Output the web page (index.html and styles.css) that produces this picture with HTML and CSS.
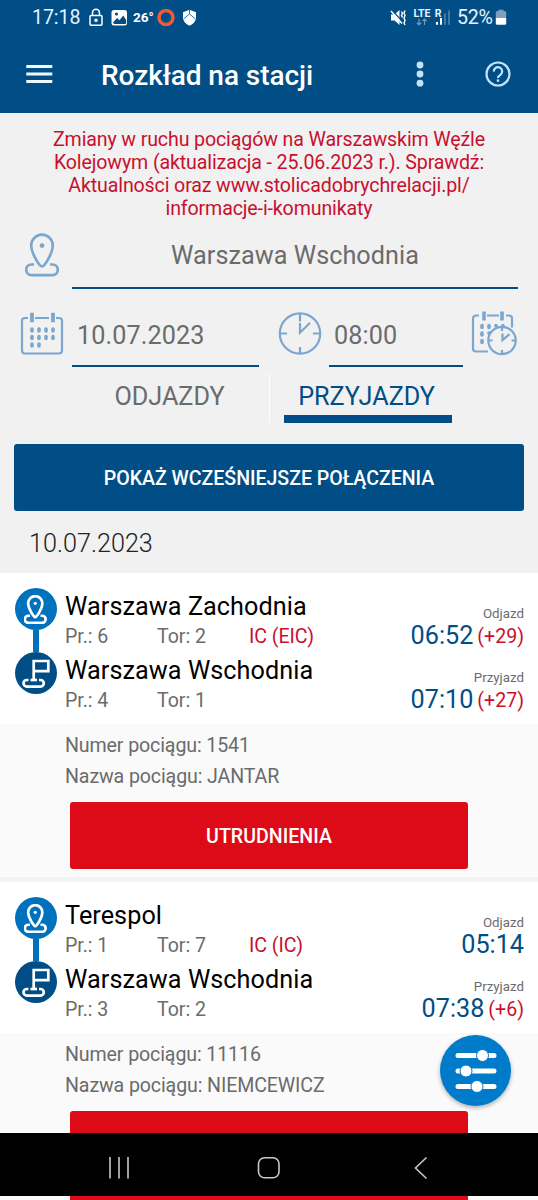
FILE: index.html
```
<!DOCTYPE html>
<html lang="pl">
<head>
<meta charset="utf-8">
<title>Rozkład na stacji</title>
<link rel="stylesheet" href="styles.css">
</head>
<body>
<svg class="defs" width="0" height="0" aria-hidden="true">
  <symbol id="pin" viewBox="0 0 34 44">
    <path d="M17 33.500C14.500 33.500 6.200 20 6.200 12.500a10.800 10.800 0 0 1 21.600 0C27.800 20 19.500 33.500 17 33.500z"/>
    <path d="M9 31.500H6.500a5.300 5.300 0 0 0 0 10.600h21a5.300 5.300 0 0 0 0-10.600H25"/>
    <circle cx="17" cy="12.600" r="2.400" class="dot"/>
  </symbol>
  <symbol id="flag" viewBox="0 0 42 42">
    <path d="M18.700 28V9H33.300V19.200H19"/>
    <path d="M13.500 28H11.800a3.300 3.300 0 0 0 0 6.600H25.500a3.300 3.300 0 0 0 0-6.600H24"/>
    <path d="M15.500 28h6.500"/>
  </symbol>
</svg>
<div class="screen">
  <header class="header">
    <div class="status">
      <span class="clock">17:18</span>
      <svg class="status-left" width="112" height="20" viewBox="88 8 112 20">
        <g fill="none" stroke="#fff" stroke-width="1.500"><rect x="90" y="15.500" width="12" height="9.700" rx="1"/><path d="M92.500 15v-2.200a3.500 3.500 0 0 1 7 0V15"/></g>
        <rect x="94.500" y="18.800" width="3" height="3" fill="#fff"/>
        <rect x="111.500" y="10" width="15.500" height="15.500" rx="2.500" fill="#fff"/>
        <path d="M113 22.500l4-4.500 2.500 2.200 3.700-4.700 3 4.500v3a1 1 0 0 1-1 1h-11z" fill="#004e85"/><circle cx="116.500" cy="14" r="1.600" fill="#004e85"/>
        <text x="133" y="22.300" class="temp">26°</text>
        <circle cx="166" cy="17.500" r="7" fill="none" stroke="#f15a35" stroke-width="3.500"/>
        <path d="M189.500 9.800l6.500 2.500v4.700c0 4-2.500 6.800-6.500 8.800-4-2-6.500-4.800-6.500-8.800v-4.700z" fill="#fff"/>
        <path d="M189.500 9.500v4.500l-5.500 4.500M189.500 14l5.500 4.500" fill="none" stroke="#004e85" stroke-width=".8"/>
      </svg>
      <svg class="status-right" width="61" height="20" viewBox="388 8 61 20">
        <path d="M390 14.500h3.500l5-4.500v15l-5-4.500H390z" fill="#fff"/><path d="M391.500 10.500l10 11.500" stroke="#004e85" stroke-width="1.200"/><path d="M390 11l11 12.500" stroke="#fff" stroke-width="1.500"/>
        <path d="M400.500 11.500l1 2-1 2 1 2M404 10.500l-1 2.500 1 2.500-1 2.500 1 2.500-1 2.500 1 2" fill="none" stroke="#fff" stroke-width="1.400"/>
        <text x="412.500" y="17.200" class="net">LTE</text>
        <path d="M418 18.800v6m-2.200-2.200l2.200 2.200 2.200-2.200M423.500 25v-6m-2.200 2.200l2.200-2.200 2.200 2.200" fill="none" stroke="#7599bb" stroke-width="1.200"/>
        <text x="433.700" y="17.200" class="net">R</text>
        <path d="M436 22v2.700M440 18v6.700" stroke="#fff" stroke-width="2"/><path d="M444 13.500v11.200M448 10.500v14.200" stroke="#5484ab" stroke-width="1.600"/>
      </svg>
      <span class="percent">52%</span>
      <svg class="battery" width="12" height="18" viewBox="0 0 12 18"><path d="M3.500 2V.8h5V2h1.200A1.500 1.500 0 0 1 11.200 3.500V9H.8V3.500A1.500 1.500 0 0 1 2.300 2z" fill="#7da0bf"/><path d="M.8 9h10.400v5.500a1.300 1.300 0 0 1-1.300 1.300H2.100a1.300 1.300 0 0 1-1.300-1.300z" fill="#fff"/></svg>
    </div>
    <div class="toolbar">
      <svg class="menu" width="27" height="20" viewBox="0 0 27 20"><path d="M.3 2.500h26M.3 10h26M.3 17.500h26" stroke="#f0f8ff" stroke-width="2.800"/></svg>
      <h1 class="title">Rozkład na stacji</h1>
      <svg class="more" width="8" height="28" viewBox="0 0 8 28" fill="#c5e2fb"><circle cx="4" cy="5" r="3.400"/><circle cx="4" cy="14" r="3.400"/><circle cx="4" cy="23.200" r="3.400"/></svg>
      <svg class="help" width="28" height="28" viewBox="0 0 28 28" fill="none" stroke="#c5e2fb" stroke-width="2.200"><circle cx="14" cy="14" r="11.500"/><path d="M9.800 11.700a4.200 4.200 0 1 1 6.800 3c-1.700 1.200-2.600 1.600-2.600 3.300"/><path d="M14 19.400v2.400" stroke-width="2.400"/></svg>
    </div>
  </header>
  <section class="search">
    <p class="notice">Zmiany w ruchu pociągów na Warszawskim Węźle<br>Kolejowym (aktualizacja - 25.06.2023 r.). Sprawdź:<br>Aktualności oraz www.stolicadobrychrelacji.pl/<br>informacje-i-komunikaty</p>
    <div class="station-row">
      <svg class="search-pin" width="34" height="44"><use href="#pin"/></svg>
      <div class="field station">Warszawa Wschodnia</div>
    </div>
    <div class="time-row">
      <svg class="line-icon cal" width="44" height="46" viewBox="0 0 44 46">
        <path d="M8 6H5a3 3 0 0 0-3 3V38.500a3 3 0 0 0 3 3H39a3 3 0 0 0 3-3V9a3 3 0 0 0-3-3h-3M15 6h14"/>
        <path d="M12 .8v9.500M33 .8v9.500" stroke-width="3.800"/>
        <g class="days"><path d="M12 17v2M19 17v2M26 17v2M33 17v2M12 24.500v2M19 24.500v2M26 24.500v2M33 24.500v2M12 32v2M19 32v2"/></g>
      </svg>
      <div class="field date">10.07.2023</div>
      <svg class="line-icon watch" width="44" height="44" viewBox="0 0 44 44"><circle cx="22" cy="21.500" r="20.200"/><path d="M22 2v7.500M22 35v7M2 21.500h7M35 21.500h7M22 11v9.700L32 10.800"/></svg>
      <div class="field hour">08:00</div>
      <svg class="line-icon now" width="46" height="46" viewBox="0 0 46 46">
        <path d="M8 4.500H5a3 3 0 0 0-3 3V37.500a3 3 0 0 0 3 3h12M16 4.500h12M35 4.500h3a3 3 0 0 1 3 3v9"/>
        <path d="M13 .5v9M31 .5v9" stroke-width="3.600"/>
        <g class="days"><path d="M11 14.500v2M18 14.500v2M25 14.500v.5M32 14.500v.5M11 22v2M11 29.500v2M18 22v.3"/></g>
        <circle cx="31" cy="29.500" r="13.700"/><path d="M31 16v4M31 39v4M17.500 29.500h4M40.500 29.500h4M31.500 22.500v6.700l7-6"/>
      </svg>
    </div>
    <div class="tabs"><div class="tab first">ODJAZDY</div><div class="tab active">PRZYJAZDY</div></div>
    <div class="earlier">POKAŻ WCZEŚNIEJSZE POŁĄCZENIA</div>
    <div class="day">10.07.2023</div>
  </section>
  <main class="list">
    <article class="card">
      <div class="route">
        <div class="markers"><div class="marker from"><svg class="marker-pin" width="22.500" height="29"><use href="#pin"/></svg></div><div class="link"></div><div class="marker to"><svg class="marker-flag" width="42" height="42"><use href="#flag"/></svg></div></div>
        <div class="legs">
          <div class="leg">
            <div class="place"><div class="name">Warszawa Zachodnia</div><div class="info"><span>Pr.: 6</span><span>Tor: 2</span><span class="train">IC (EIC)</span></div></div>
            <div class="when"><div class="label">Odjazd</div><div class="time">06:52<span class="delay">(+29)</span></div></div>
          </div>
          <div class="leg">
            <div class="place"><div class="name">Warszawa Wschodnia</div><div class="info"><span>Pr.: 4</span><span>Tor: 1</span></div></div>
            <div class="when"><div class="label">Przyjazd</div><div class="time">07:10<span class="delay">(+27)</span></div></div>
          </div>
        </div>
      </div>
      <div class="details"><div>Numer pociągu: 1541</div><div>Nazwa pociągu: JANTAR</div><div class="alert">UTRUDNIENIA</div></div>
    </article>
    <article class="card">
      <div class="route">
        <div class="markers"><div class="marker from"><svg class="marker-pin" width="22.500" height="29"><use href="#pin"/></svg></div><div class="link"></div><div class="marker to"><svg class="marker-flag" width="42" height="42"><use href="#flag"/></svg></div></div>
        <div class="legs">
          <div class="leg">
            <div class="place"><div class="name">Terespol</div><div class="info"><span>Pr.: 1</span><span>Tor: 7</span><span class="train">IC (IC)</span></div></div>
            <div class="when"><div class="label">Odjazd</div><div class="time">05:14</div></div>
          </div>
          <div class="leg">
            <div class="place"><div class="name">Warszawa Wschodnia</div><div class="info"><span>Pr.: 3</span><span>Tor: 2</span></div></div>
            <div class="when"><div class="label">Przyjazd</div><div class="time">07:38<span class="delay">(+6)</span></div></div>
          </div>
        </div>
      </div>
      <div class="details"><div>Numer pociągu: 11116</div><div>Nazwa pociągu: NIEMCEWICZ</div><div class="alert cut"></div></div>
    </article>
  </main>
  <div class="filter">
    <svg width="44" height="44" viewBox="0 0 44 44"><path d="M4 6.500h36M4 22h36M4 37.500h36" stroke="#fff" stroke-width="5" stroke-linecap="round"/><g fill="#fff" stroke="#007bca" stroke-width="1"><circle cx="28.500" cy="6.500" r="6"/><circle cx="12" cy="22" r="6"/><circle cx="23" cy="37.500" r="6"/></g></svg>
  </div>
  <nav class="nav">
    <svg width="22" height="24" viewBox="0 0 22 24"><path d="M2 1v21.500M11 1v21.500M20 1v21.500" stroke="#c8c8c8" stroke-width="1.600"/></svg>
    <svg class="home" width="24" height="24" viewBox="0 0 24 24"><rect x="1.500" y="1.800" width="20.500" height="20" rx="6" fill="none" stroke="#c8c8c8" stroke-width="1.600"/></svg>
    <svg width="16" height="24" viewBox="0 0 16 24"><path d="M13.500 1.500L2.500 12l11 10.500" fill="none" stroke="#c8c8c8" stroke-width="1.600"/></svg>
  </nav>
  <div class="under"><div class="under-button"></div></div>
</div>
</body>
</html>
```
FILE: styles.css
```
* { box-sizing: border-box; }
body { margin: 0; font-family: Roboto, "Noto Sans", sans-serif; font-size: 19.600px; background: #f1f1f1; color: #6b6b6b; }
.defs { position: absolute; }
svg { display: block; flex: none; }
.screen { position: relative; width: 538px; height: 1200px; overflow: hidden; display: flex; flex-direction: column; }

.header { height: 113px; flex: none; background: #004e85; color: #fff; }
.status { height: 36px; display: flex; align-items: center; padding: 0 31px 0 32px; }
.clock, .percent { line-height: 36px; color: #e5f3ff; }
.clock { width: 56px; letter-spacing: -.1px; }
.status-right { margin-left: auto; }
.percent { width: 38px; margin-left: 7px; letter-spacing: -.3px; }
.temp { font: 700 13.500px Roboto, sans-serif; fill: #fff; }
.net { font: 700 10.500px Roboto, sans-serif; fill: #e5f3ff; }
.toolbar { height: 76px; display: flex; align-items: center; padding: 0 26px 0 26px; }
.title { margin: 3px 0 0 48px; font-size: 28px; font-weight: 500; letter-spacing: -.07px; line-height: 36px; white-space: nowrap; }
.more { margin-left: auto; }
.help { margin-left: 60px; }

.search { height: 460px; flex: none; padding-top: 15px; }
.notice { margin: 0; color: #c8102e; text-align: center; line-height: 23px; letter-spacing: -.13px; white-space: nowrap; }
.station-row { display: flex; height: 69px; padding: 0 20px 0 26px; }
#pin, #flag { overflow: visible; }
.search-pin, .line-icon { fill: none; stroke: #7ba6d0; stroke-width: 2.200; }
.search-pin { margin: 13px 0 0 -1px; stroke-width: 2.700; color: #7ba6d0; }
.dot { stroke: none; fill: currentColor; }
.days { stroke-width: 3.600; stroke-linecap: round; }
.field { border-bottom: 2px solid #004e85; font-size: 25.200px; }
.station { flex: 1; margin-left: 13px; line-height: 72px; letter-spacing: .05px; text-align: center; }
.time-row { display: flex; height: 78px; padding: 0 20px; align-items: flex-start; }
.cal { margin-top: 23px; }
.date, .hour { height: 78px; line-height: 94px; padding-left: 5px; letter-spacing: .1px; }
.date { width: 187px; margin-left: 8px; }
.watch { margin: 23px 0 0 19px; }
.hour { width: 134px; margin-left: 7px; }
.now { margin: 22px 0 0 8px; }
.tabs { display: flex; margin: 7px 0 0; height: 49px; font-size: 25.200px; line-height: 46px; text-align: center; }
.tab { width: 168px; height: 49px; }
.first { width: 270px; padding-left: 70px; border-right: 1.500px solid #fff; }
.active { margin-left: 14px; padding-right: 3px; color: #004e85; border-bottom: 8px solid #004e85; }
.earlier { margin: 21px 14px 0; height: 67px; border-radius: 3px; background: #004e85; color: #fff; font-weight: 500; letter-spacing: -.05px; line-height: 70px; text-align: center; }
.day { padding-left: 29px; font-size: 25.200px; font-weight: 300; color: #222; line-height: 66px; }

.list { flex: none; height: 560px; overflow: hidden; }
.card { height: 309px; border-bottom: 5px solid #f3f3f3; background: #fafafa; }
.route { height: 151px; padding: 15px 14px 0; display: flex; background: #fff; }
.markers { width: 43px; display: flex; flex-direction: column; align-items: center; }
.marker { width: 42px; height: 42px; flex: none; border-radius: 50%; display: flex; align-items: center; justify-content: center; fill: none; stroke: #fff; color: #fff; }
.from { background: #0071bc; }
.to { background: #004e85; }
.link { width: 6px; height: 22px; flex: none; background: #0071bc; }
.marker-pin { stroke-width: 4; }
.marker-flag { stroke-width: 2.700; }
.legs { flex: 1; padding-left: 8px; }
.leg { display: flex; justify-content: space-between; height: 64px; }
.name { margin-top: 1px; font-size: 25.200px; line-height: 36px; letter-spacing: .07px; color: #000; white-space: nowrap; }
.info { display: flex; line-height: 23px; }
.info span { width: 92px; white-space: nowrap; letter-spacing: -.05px; }
.info .train { color: #c8102e; }
.when { text-align: right; padding-top: 17px; }
.label { font-size: 13.300px; line-height: 17px; }
.time { font-size: 25.200px; line-height: 27px; color: #004e85; white-space: nowrap; }
.delay { position: relative; top: -1px; margin-left: 4px; font-size: 19.600px; color: #c8102e; }
.details { height: 153px; padding: 7px 0 0 65px; line-height: 30.500px; letter-spacing: -.12px; overflow: hidden; }
.alert { margin: 10px 0 0 5px; width: 398px; height: 67px; border-radius: 3px; background: #dd0b18; color: #fff; font-weight: 500; letter-spacing: 0; line-height: 70px; text-align: center; }
.filter { position: absolute; left: 440px; top: 1035px; width: 71px; height: 71px; border-radius: 50%; background: #007bca; display: flex; align-items: center; justify-content: center; box-shadow: 0 2px 4px rgba(0,0,0,.3); }
.nav { height: 63px; flex: none; display: flex; align-items: center; justify-content: space-between; padding: 6px 109px 0 108px; background: #000; }
.home { margin-right: 5px; }
.under { height: 4px; flex: none; background: #fafafa; padding-left: 70px; }
.under-button { width: 398px; height: 4px; background: #dd0b18; }
```
